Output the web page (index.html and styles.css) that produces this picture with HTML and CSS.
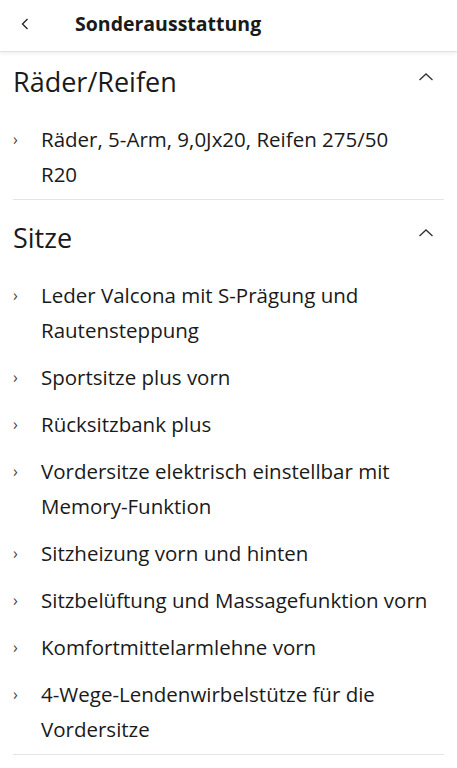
FILE: index.html
```html
<!DOCTYPE html>
<html>
<head>
<meta charset="utf-8">
<meta name="viewport" content="width=device-width, initial-scale=1.0">
<title>Sonderausstattung</title>
<link rel="stylesheet" href="styles.css">
</head>
<body>
<header class="top-bar">
    <span class="back">
        <svg viewBox="0 0 8 12" xmlns="http://www.w3.org/2000/svg"><path d="M6.5 1L1.5 6L6.5 11"/></svg>
    </span>
    <h1 class="title">Sonderausstattung</h1>
</header>

<section class="group">
    <div class="group-head">
        <h2>Räder/Reifen</h2>
        <svg class="toggle" viewBox="0 0 16 8" xmlns="http://www.w3.org/2000/svg"><path d="M1.5 7L8 1L14.5 7"/></svg>
    </div>
    <ul class="items">
        <li>Räder, 5-Arm, 9,0Jx20, Reifen 275/50 R20</li>
    </ul>
</section>

<section class="group">
    <div class="group-head">
        <h2>Sitze</h2>
        <svg class="toggle" viewBox="0 0 16 8" xmlns="http://www.w3.org/2000/svg"><path d="M1.5 7L8 1L14.5 7"/></svg>
    </div>
    <ul class="items">
        <li>Leder Valcona mit S-Prägung und Rautensteppung</li>
        <li>Sportsitze plus vorn</li>
        <li>Rücksitzbank plus</li>
        <li>Vordersitze elektrisch einstellbar mit Memory-Funktion</li>
        <li>Sitzheizung vorn und hinten</li>
        <li>Sitzbelüftung und Massagefunktion vorn</li>
        <li>Komfortmittelarmlehne vorn</li>
        <li>4-Wege-Lendenwirbelstütze für die Vordersitze</li>
    </ul>
</section>
</body>
</html>
```
FILE: styles.css
```css
body {
    margin: 0;
    padding: 0;
    font-family: "Open Sans", "Noto Sans", sans-serif;
    color: #1a1a1a;
    background: #fff;
    overflow: hidden;
}
.top-bar {
    display: flex;
    align-items: center;
    height: 51px;
    border-bottom: 1px solid #e2e2e2;
    box-shadow: 0 2px 4px rgba(0, 0, 0, 0.06);
}
.back {
    width: 75px;
    padding-left: 21px;
    padding-bottom: 4px;
    box-sizing: border-box;
    display: flex;
}
.back svg {
    width: 8px;
    height: 12px;
    fill: none;
    stroke: #222;
    stroke-width: 1.3;
}
.title {
    margin: 0 0 4px 0;
    font-size: 19.5px;
    font-weight: 700;
}
.group {
    margin: 0 13px;
    border-bottom: 1px solid #e4e4e4;
}
.group + .group {
    padding-top: 8px;
}
.group-head {
    display: flex;
    align-items: center;
    justify-content: space-between;
    height: 58px;
}
.group-head h2 {
    margin: 0;
    font-size: 27px;
    font-weight: 400;
}
.toggle {
    width: 16px;
    height: 8px;
    margin: 0 10px 8px 0;
    fill: none;
    stroke: #333;
    stroke-width: 1.3;
}
.items {
    list-style: none;
    margin: 0;
    padding: 5.5px 15px 1.5px 0;
}
.items li {
    position: relative;
    padding: 6px 0 6px 28px;
    font-size: 20.5px;
    line-height: 35px;
}
.items li::before {
    content: "›";
    position: absolute;
    left: 0;
    top: 6px;
    font-size: 16px;
    color: #444;
}
```
